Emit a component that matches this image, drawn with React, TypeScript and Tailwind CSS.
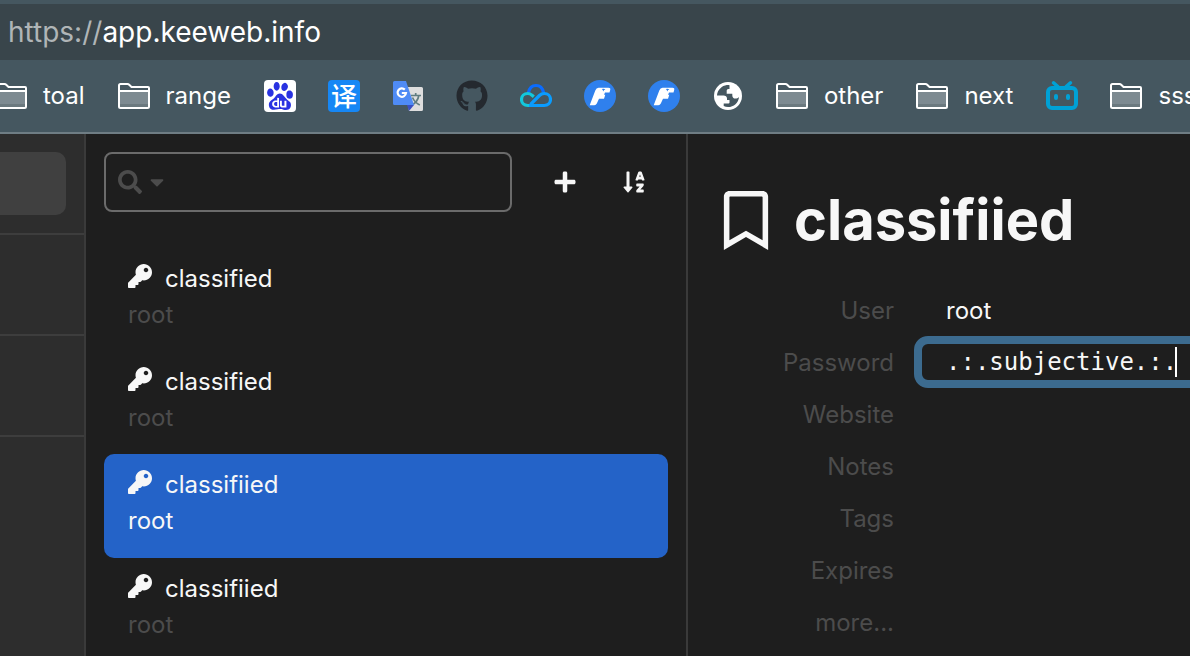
import type { ReactNode } from "react";
import {
  FaCaretDown,
  FaGithub,
  FaKey,
  FaPlus,
  FaRegBookmark,
  FaSearch,
  FaSortAlphaDown,
} from "react-icons/fa";
import { SiBaidu } from "react-icons/si";

function FolderIcon() {
  return (
    <svg width="32" height="26" viewBox="0 0 32 26" fill="none" aria-hidden="true">
      <path d="M2 9h28v15H2z" fill="#7d8a91" />
      <path d="M2 21h28v3H2z" fill="#6b797f" />
      <path
        d="M1 23.5V2.5Q1 1 2.500 1H9.500Q10.500 1 11.200 1.700L13.500 4H30Q31 4 31 5V23.500Q31 25 29.500 25H2.500Q1 25 1 23.500Z"
        stroke="#fff"
        strokeWidth="2"
      />
      <path d="M1 8h30" stroke="#fff" strokeWidth="2" />
    </svg>
  );
}

function BaiduIcon() {
  return (
    <span className="flex size-8 items-center justify-center rounded bg-white text-[#2932e1]">
      <SiBaidu size={28} />
    </span>
  );
}

function DictionaryIcon() {
  return (
    <span className="flex size-8 items-center justify-center rounded bg-[#1687f5] pb-0.5 font-['Noto_Sans_CJK_SC',sans-serif] text-[26px] leading-8 font-medium text-white">
      译
    </span>
  );
}

function TranslateIcon() {
  return (
    <svg width="32" height="32" viewBox="0 0 32 32" aria-hidden="true">
      <path d="M13 7h16.500a1.500 1.500 0 0 1 1.500 1.500v21a1.500 1.500 0 0 1-1.500 1.500H17z" fill="#dedede" />
      <path
        d="M19 15.500h10M23.700 13v2.500M26.800 15.500c-.6 4-3 7.500-7.500 10M20.500 17.500c1.500 3.500 4 6 7.300 7.500"
        stroke="#607d80"
        strokeWidth="1.700"
        fill="none"
      />
      <path d="M15 25h7l-5 6z" fill="#3a4fc1" />
      <path d="M2.500 1H14l8 24H2.500A1.500 1.500 0 0 1 1 23.500v-21A1.500 1.500 0 0 1 2.500 1z" fill="#4f8bf5" />
      <path
        d="M12.800 9.600A4.200 4.200 0 1 0 14 13H9.800"
        stroke="#fff"
        strokeWidth="2.200"
        fill="none"
      />
    </svg>
  );
}

function CloudIcon() {
  return (
    <svg width="32" height="32" viewBox="0 0 32 32" fill="none" strokeWidth="3.200" aria-hidden="true">
      <path d="M8.500 12.500C9.400 8 12.300 5.500 16 5.500S22.600 8 23.500 12.500" stroke="#0a6cff" />
      <path
        d="M13.800 16.700L12 15.200C10.700 14.100 9.300 13.500 7.800 13.500C4.300 13.500 1.500 16 1.500 19.500S4.300 25.500 7.800 25.500H12"
        stroke="#12c8dc"
      />
      <path
        d="M9 25.500H24.200C27.700 25.500 30.500 23 30.500 19.500S27.700 13.500 24.200 13.500C22.300 13.500 20.700 14.200 19.400 15.500L10.500 24.500"
        stroke="#0a9cff"
      />
    </svg>
  );
}

function FeatherIcon() {
  return (
    <svg width="32" height="32" viewBox="0 0 32 32" aria-hidden="true">
      <circle cx="16" cy="16" r="16" fill="#2f80ed" />
      <path
        d="M14.500 7.800H24.500Q26.800 7.800 26.200 10L25.500 12.500H21L20 14.800H21.300L20 18.800H15L12.800 23.500Q12 25.200 10.300 25.200H5.700L11.300 10.500Q12.300 7.800 14.500 7.800Z"
        fill="#fff"
      />
      <path d="M17.800 9q2.600-.5 3.600.5-1.500.1-2.200 1.900-.2-1.600-1.400-2.400z" fill="#2f80ed" />
    </svg>
  );
}

function GlobeIcon() {
  return (
    <svg width="32" height="32" viewBox="0 0 32 32" aria-hidden="true">
      <circle cx="16" cy="16" r="14" fill="#fff" />
      <path
        d="M17.500 5.200C16.500 5 12.500 4.900 9.500 7.300C6.300 9.800 5 13 5 15.400H11.500C13.500 15.400 15 16.500 15 18.500V20H17.500V22.500Q17.500 23.500 16.500 23.500H11.700V26C13 26.700 14.500 27 16 27C21.800 27 26.600 22.600 27 16.900C26 18.200 24.800 18.600 23.500 18.600C21.500 18.600 20.300 17.300 20.300 15.200V13.800H14.700V10.500Q14.700 9 16.300 9H17.500Z"
        fill="#455760"
      />
    </svg>
  );
}

function BilibiliIcon() {
  return (
    <svg width="32" height="32" viewBox="0 0 32 32" fill="none" stroke="#00a1d6" strokeLinecap="round" aria-hidden="true">
      <rect x="2" y="8" width="28" height="20" rx="4" strokeWidth="4" />
      <path d="M7.500 2.800l4.500 4M24.500 2.800l-4.500 4" strokeWidth="3.500" />
      <path d="M10 16v2M22 16v2" strokeWidth="4" />
    </svg>
  );
}

type Bookmark = { name: string; label?: string; icon: ReactNode };

const bookmarks: Bookmark[] = [
  { name: "toal", label: "toal", icon: <FolderIcon /> },
  { name: "range", label: "range", icon: <FolderIcon /> },
  { name: "Baidu", icon: <BaiduIcon /> },
  { name: "Dictionary", icon: <DictionaryIcon /> },
  { name: "Translate", icon: <TranslateIcon /> },
  { name: "GitHub", icon: <FaGithub size={32} color="#24292f" /> },
  { name: "Cloud", icon: <CloudIcon /> },
  { name: "Feather", icon: <FeatherIcon /> },
  { name: "Feather notes", icon: <FeatherIcon /> },
  { name: "Web", icon: <GlobeIcon /> },
  { name: "other", label: "other", icon: <FolderIcon /> },
  { name: "next", label: "next", icon: <FolderIcon /> },
  { name: "Bilibili", icon: <BilibiliIcon /> },
  { name: "sss", label: "sss", icon: <FolderIcon /> },
];

const entries = [
  { title: "classified", user: "root", active: false },
  { title: "classified", user: "root", active: false },
  { title: "classifiied", user: "root", active: true },
  { title: "classifiied", user: "root", active: false },
];

const emptyFields = ["Website", "Notes", "Tags", "Expires"];

function BrowserBar() {
  return (
    <header className="shrink-0 border-b-2 border-[#6f7d84] bg-[#455760] pt-1 text-white">
      <div className="flex h-14 items-center bg-[#39454b] px-2 text-[28px] leading-8">
        <span className="text-[#b0b5b7]">https://</span>
        <span>app.keeweb.info</span>
      </div>
      <nav aria-label="Bookmarks" className="-ml-[5px] flex h-18 items-center gap-8 overflow-hidden">
        {bookmarks.map((b) => (
          <a key={b.name} href="#" aria-label={b.name} className="flex shrink-0 items-center gap-4 text-2xl">
            {b.icon}
            {b.label && <span className="pr-px">{b.label}</span>}
          </a>
        ))}
      </nav>
    </header>
  );
}

function Sidebar() {
  return (
    <aside className="w-[86px] shrink-0 border-r-2 border-[#3a3a3a] bg-[#2d2d2d]">
      <div className="h-[101px] border-b-2 border-[#3d3d3d] pt-[18px] pr-[18px]">
        <button aria-label="All items" className="block h-[63px] w-full rounded-r-[10px] bg-[#404040]" />
      </div>
      <div className="h-[101px] border-b-2 border-[#3d3d3d]" />
      <div className="h-[101px] border-b-2 border-[#3d3d3d]" />
    </aside>
  );
}

function EntryList() {
  return (
    <section className="flex w-[602px] shrink-0 flex-col border-r-2 border-[#3a3a3a] px-[18px] pt-[18px]">
      <div className="flex items-center">
        <label className="mr-[18px] flex h-15 min-w-0 flex-1 items-center gap-1 rounded-lg border-2 border-[#6b6b6b] px-3 text-[#4c4c4c]">
          <FaSearch size={24} className="shrink-0" />
          <FaCaretDown size={22} className="shrink-0" />
          <input type="text" aria-label="Search" className="min-w-0 flex-1 bg-transparent text-2xl text-white outline-none" />
        </label>
        <button aria-label="New entry" className="flex h-15 w-[69px] items-center justify-center">
          <FaPlus size={24} />
        </button>
        <button aria-label="Sort" className="flex h-15 w-[69px] items-center justify-center">
          <FaSortAlphaDown size={24} />
        </button>
      </div>
      <ul className="mt-9">
        {entries.map((e, i) => (
          <li key={i}>
            <button
              className={
                e.active
                  ? "block w-full rounded-[10px] bg-[#2463c8] px-6 pt-[13px] pb-[19px] text-left text-2xl leading-9"
                  : "block w-full px-6 pt-[13px] pb-[18px] text-left text-2xl leading-9"
              }
            >
              <span className="flex items-center gap-[13px]">
                <FaKey size={24} className="mb-1.5 shrink-0" />
                {e.title}
              </span>
              <span className={e.active ? "block" : "block text-[#4c4c4c]"}>{e.user}</span>
            </button>
          </li>
        ))}
      </ul>
    </section>
  );
}

function Details() {
  return (
    <main className="min-w-0 flex-1 overflow-hidden pt-[50px] pl-9">
      <div className="flex items-center gap-[22px]">
        <button aria-label="Icon" className="shrink-0">
          <FaRegBookmark size={59} className="-ml-1 w-13" />
        </button>
        <h1 className="text-[56px] leading-[72px] font-bold">classifiied</h1>
      </div>
      <div className="mt-7 text-2xl">
        <div className="flex h-13 items-center pt-0.5">
          <span className="w-[170px] shrink-0 text-right text-[#4c4c4c]">User</span>
          <span className="pl-13">root</span>
        </div>
        <div className="flex h-13 items-center">
          <label htmlFor="password" className="w-[170px] shrink-0 pt-0.5 text-right text-[#4c4c4c]">
            Password
          </label>
          <div className="-mr-5 ml-5 flex h-13 min-w-0 flex-1 items-center rounded-[14px] border-8 border-[#3c6b8f] pl-6 font-['DejaVu_Sans_Mono',monospace]">
            <input
              id="password"
              type="text"
              defaultValue=".:.subjective.:."
              className="w-[16ch] shrink-0 bg-transparent outline-none"
            />
            <span className="-ml-0.5 h-[30px] w-0.5 shrink-0 bg-white" />
          </div>
        </div>
        {emptyFields.map((f) => (
          <div key={f} className="flex h-13 items-center pt-0.5">
            <span className="w-[170px] shrink-0 text-right text-[#4c4c4c]">{f}</span>
          </div>
        ))}
        <div className="flex h-13 items-center pt-0.5">
          <button className="w-[170px] shrink-0 text-right text-[#4c4c4c]">more...</button>
        </div>
      </div>
    </main>
  );
}

export default function App() {
  return (
    <div className="flex h-screen flex-col overflow-hidden bg-[#1e1e1e] font-['Inter',sans-serif] text-[#f7f7f7]">
      <BrowserBar />
      <div className="flex min-h-0 flex-1">
        <Sidebar />
        <EntryList />
        <Details />
      </div>
    </div>
  );
}
